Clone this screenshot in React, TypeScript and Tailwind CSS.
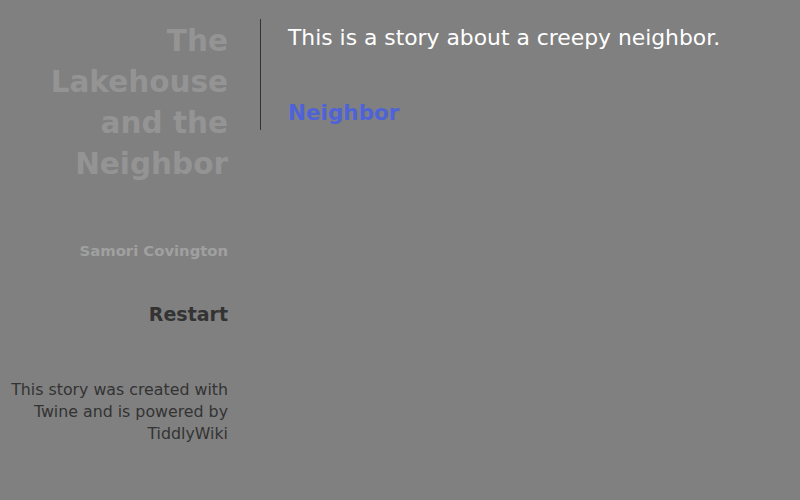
export default function App() {
  return (
    <div
      className="flex h-[500px] w-[800px] bg-[#808080]"
      style={{ fontFamily: '"DejaVu Sans", Verdana, sans-serif' }}
    >
      <div className="flex w-[228px] shrink-0 flex-col items-end pt-[21px] text-right">
        <h1 className="text-[29.5px] font-bold leading-[41px] text-[#949494]">
          The Lakehouse and the Neighbor
        </h1>
        <div className="mt-[55px] text-[14.8px] font-bold text-[#a0a0a0]">Samori Covington</div>
        <div className="mt-[38px] text-[19px] font-bold text-[#333333]">Restart</div>
        <div className="mt-[50px] text-[15.8px] leading-[22px] text-[#333333]">
          This story was created with Twine and is powered by TiddlyWiki
        </div>
      </div>
      <div className="ml-[32px] mt-[19px] flex h-[111px] border-l border-[#333333] pl-[27px]">
        <div>
          <p className="pt-[5px] text-[21.85px] leading-[28px] text-white">
            This is a story about a creepy neighbor.
          </p>
          <p className="mt-[45px] text-[21.5px] font-bold text-[#4f63d8]">Neighbor</p>
        </div>
      </div>
    </div>
  )
}
